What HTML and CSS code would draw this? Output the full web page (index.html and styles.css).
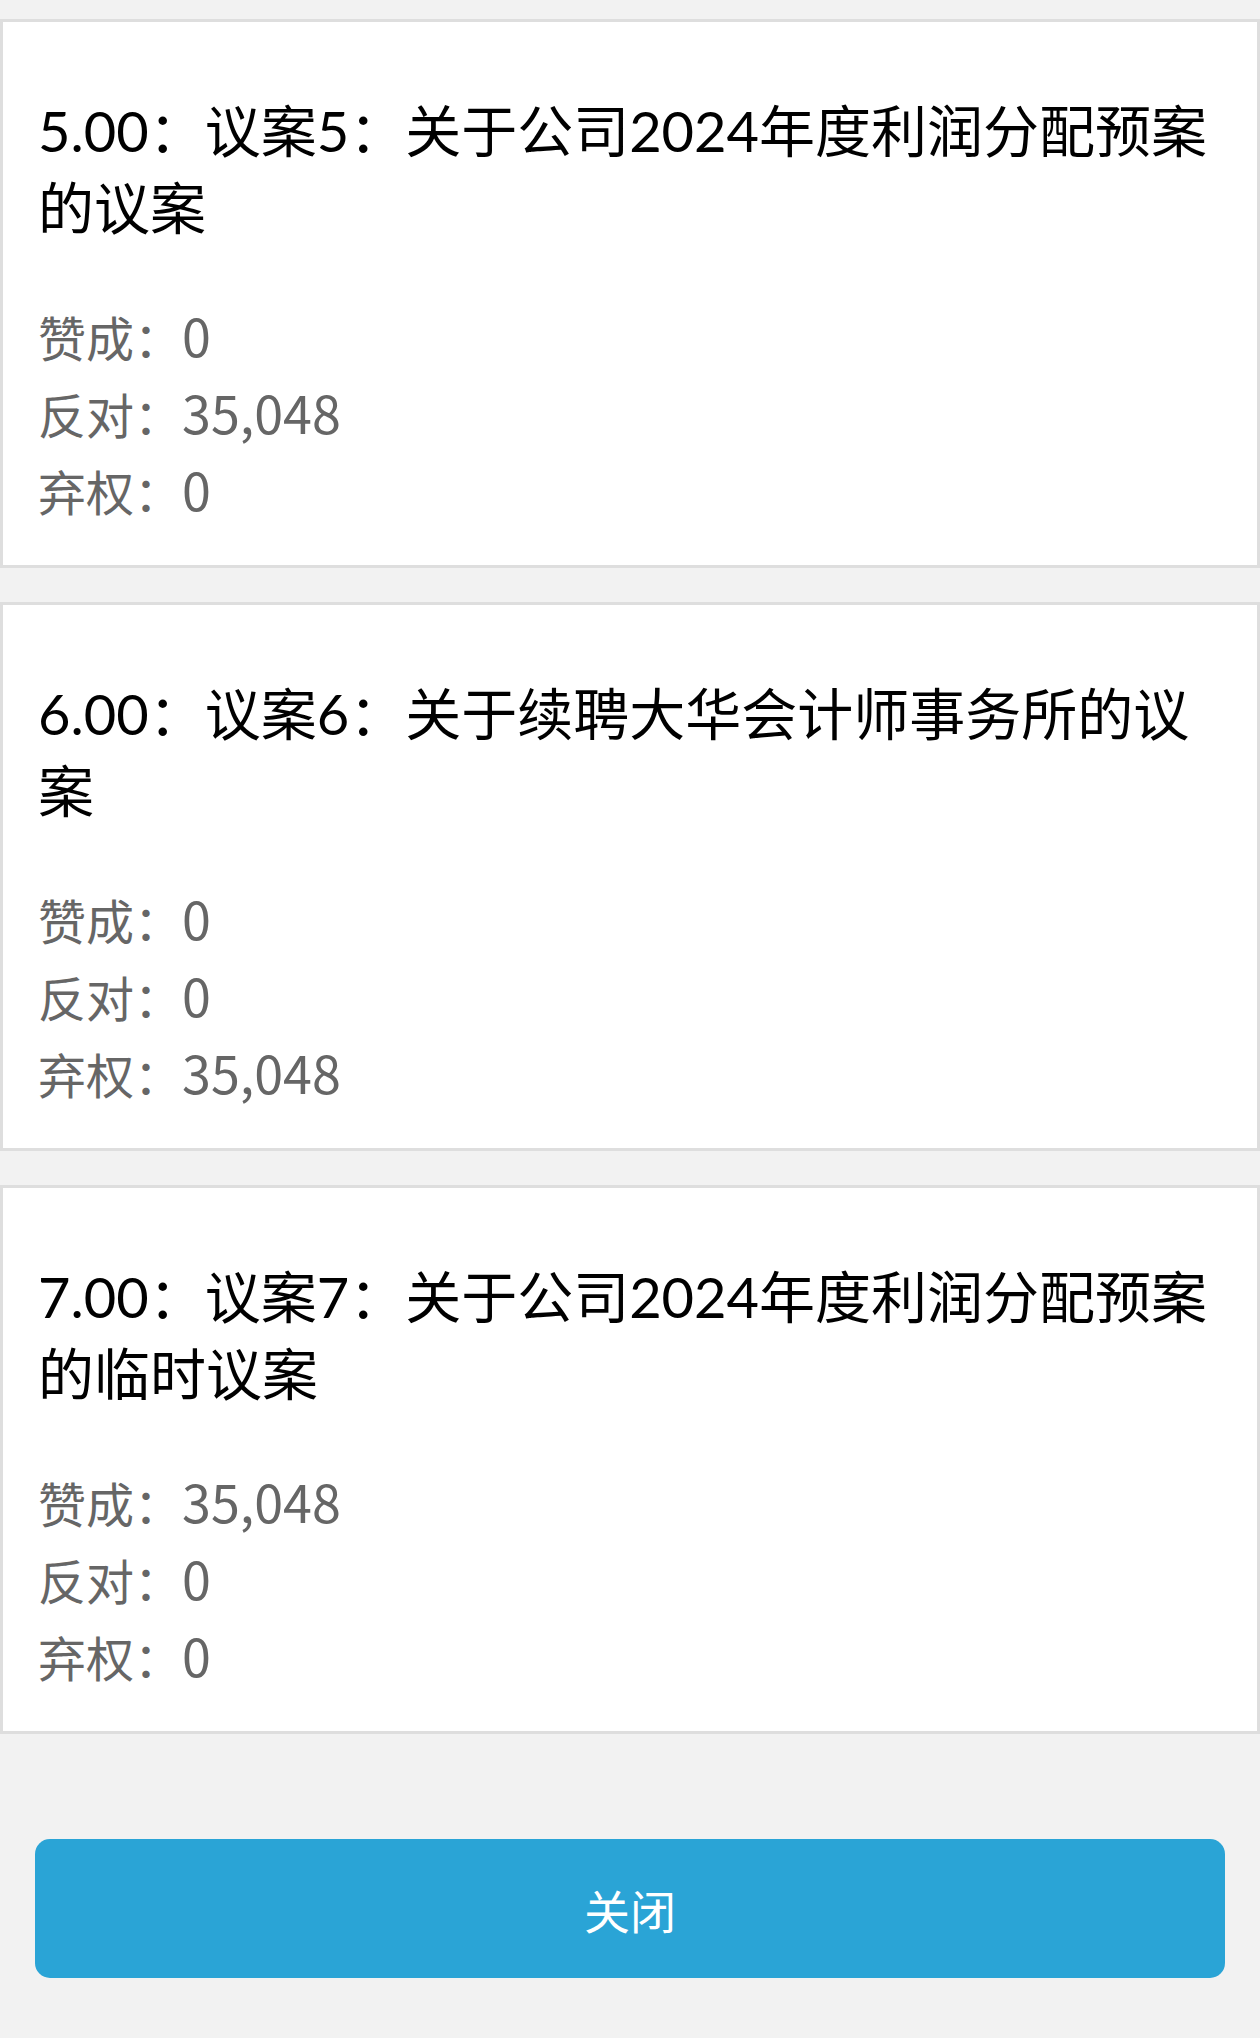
FILE: index.html
```html
<!DOCTYPE html>
<html lang="zh-CN">
<head>
    <meta charset="UTF-8">
    <meta name="viewport" content="width=device-width, initial-scale=1.0">
    <title>表决结果</title>
    <link rel="stylesheet" href="styles.css">
</head>
<body>
    <div class="vote-list">
        <div class="vote-card">
            <div class="vote-title">5.00：议案5：关于公司2024年度利润分配预案的议案</div>
            <div class="vote-stats">
                <div class="vote-row">赞成：<span class="vote-num">0</span></div>
                <div class="vote-row">反对：<span class="vote-num">35,048</span></div>
                <div class="vote-row">弃权：<span class="vote-num">0</span></div>
            </div>
        </div>

        <div class="vote-card">
            <div class="vote-title">6.00：议案6：关于续聘大华会计师事务所的议案</div>
            <div class="vote-stats">
                <div class="vote-row">赞成：<span class="vote-num">0</span></div>
                <div class="vote-row">反对：<span class="vote-num">0</span></div>
                <div class="vote-row">弃权：<span class="vote-num">35,048</span></div>
            </div>
        </div>

        <div class="vote-card">
            <div class="vote-title">7.00：议案7：关于公司2024年度利润分配预案的临时议案</div>
            <div class="vote-stats">
                <div class="vote-row">赞成：<span class="vote-num">35,048</span></div>
                <div class="vote-row">反对：<span class="vote-num">0</span></div>
                <div class="vote-row">弃权：<span class="vote-num">0</span></div>
            </div>
        </div>
    </div>

    <div class="footer">
        <button class="close-button">关闭</button>
    </div>
</body>
</html>
```

FILE: styles.css
```css
body {
    font-family: "Noto Sans CJK SC", "Noto Sans", sans-serif;
    margin: 0;
    background-color: #f2f2f2;
    min-height: 100vh;
}

.vote-list {
    display: flex;
    flex-direction: column;
    gap: 34px;
    padding-top: 19px;
}

.vote-card {
    background-color: #fff;
    border: 3px solid #dedede;
    height: 549px;
    box-sizing: border-box;
    padding: 70px 35px 36px;
}

.vote-title {
    font-family: Lato, "Noto Sans CJK SC", sans-serif;
    font-size: 56px;
    line-height: 77px;
    color: #000;
    margin-bottom: 52px;
}

.vote-row {
    font-size: 48px;
    line-height: 77px;
    color: #666;
}

.vote-num {
    font-size: 52px;
    line-height: 1;
}

.footer {
    padding: 105px 35px 0;
}

.close-button {
    display: block;
    width: 100%;
    height: 139px;
    background-color: #2aa4d6;
    color: #fff;
    border: none;
    border-radius: 15px;
    font-family: inherit;
    font-size: 46px;
    cursor: pointer;
}
```
